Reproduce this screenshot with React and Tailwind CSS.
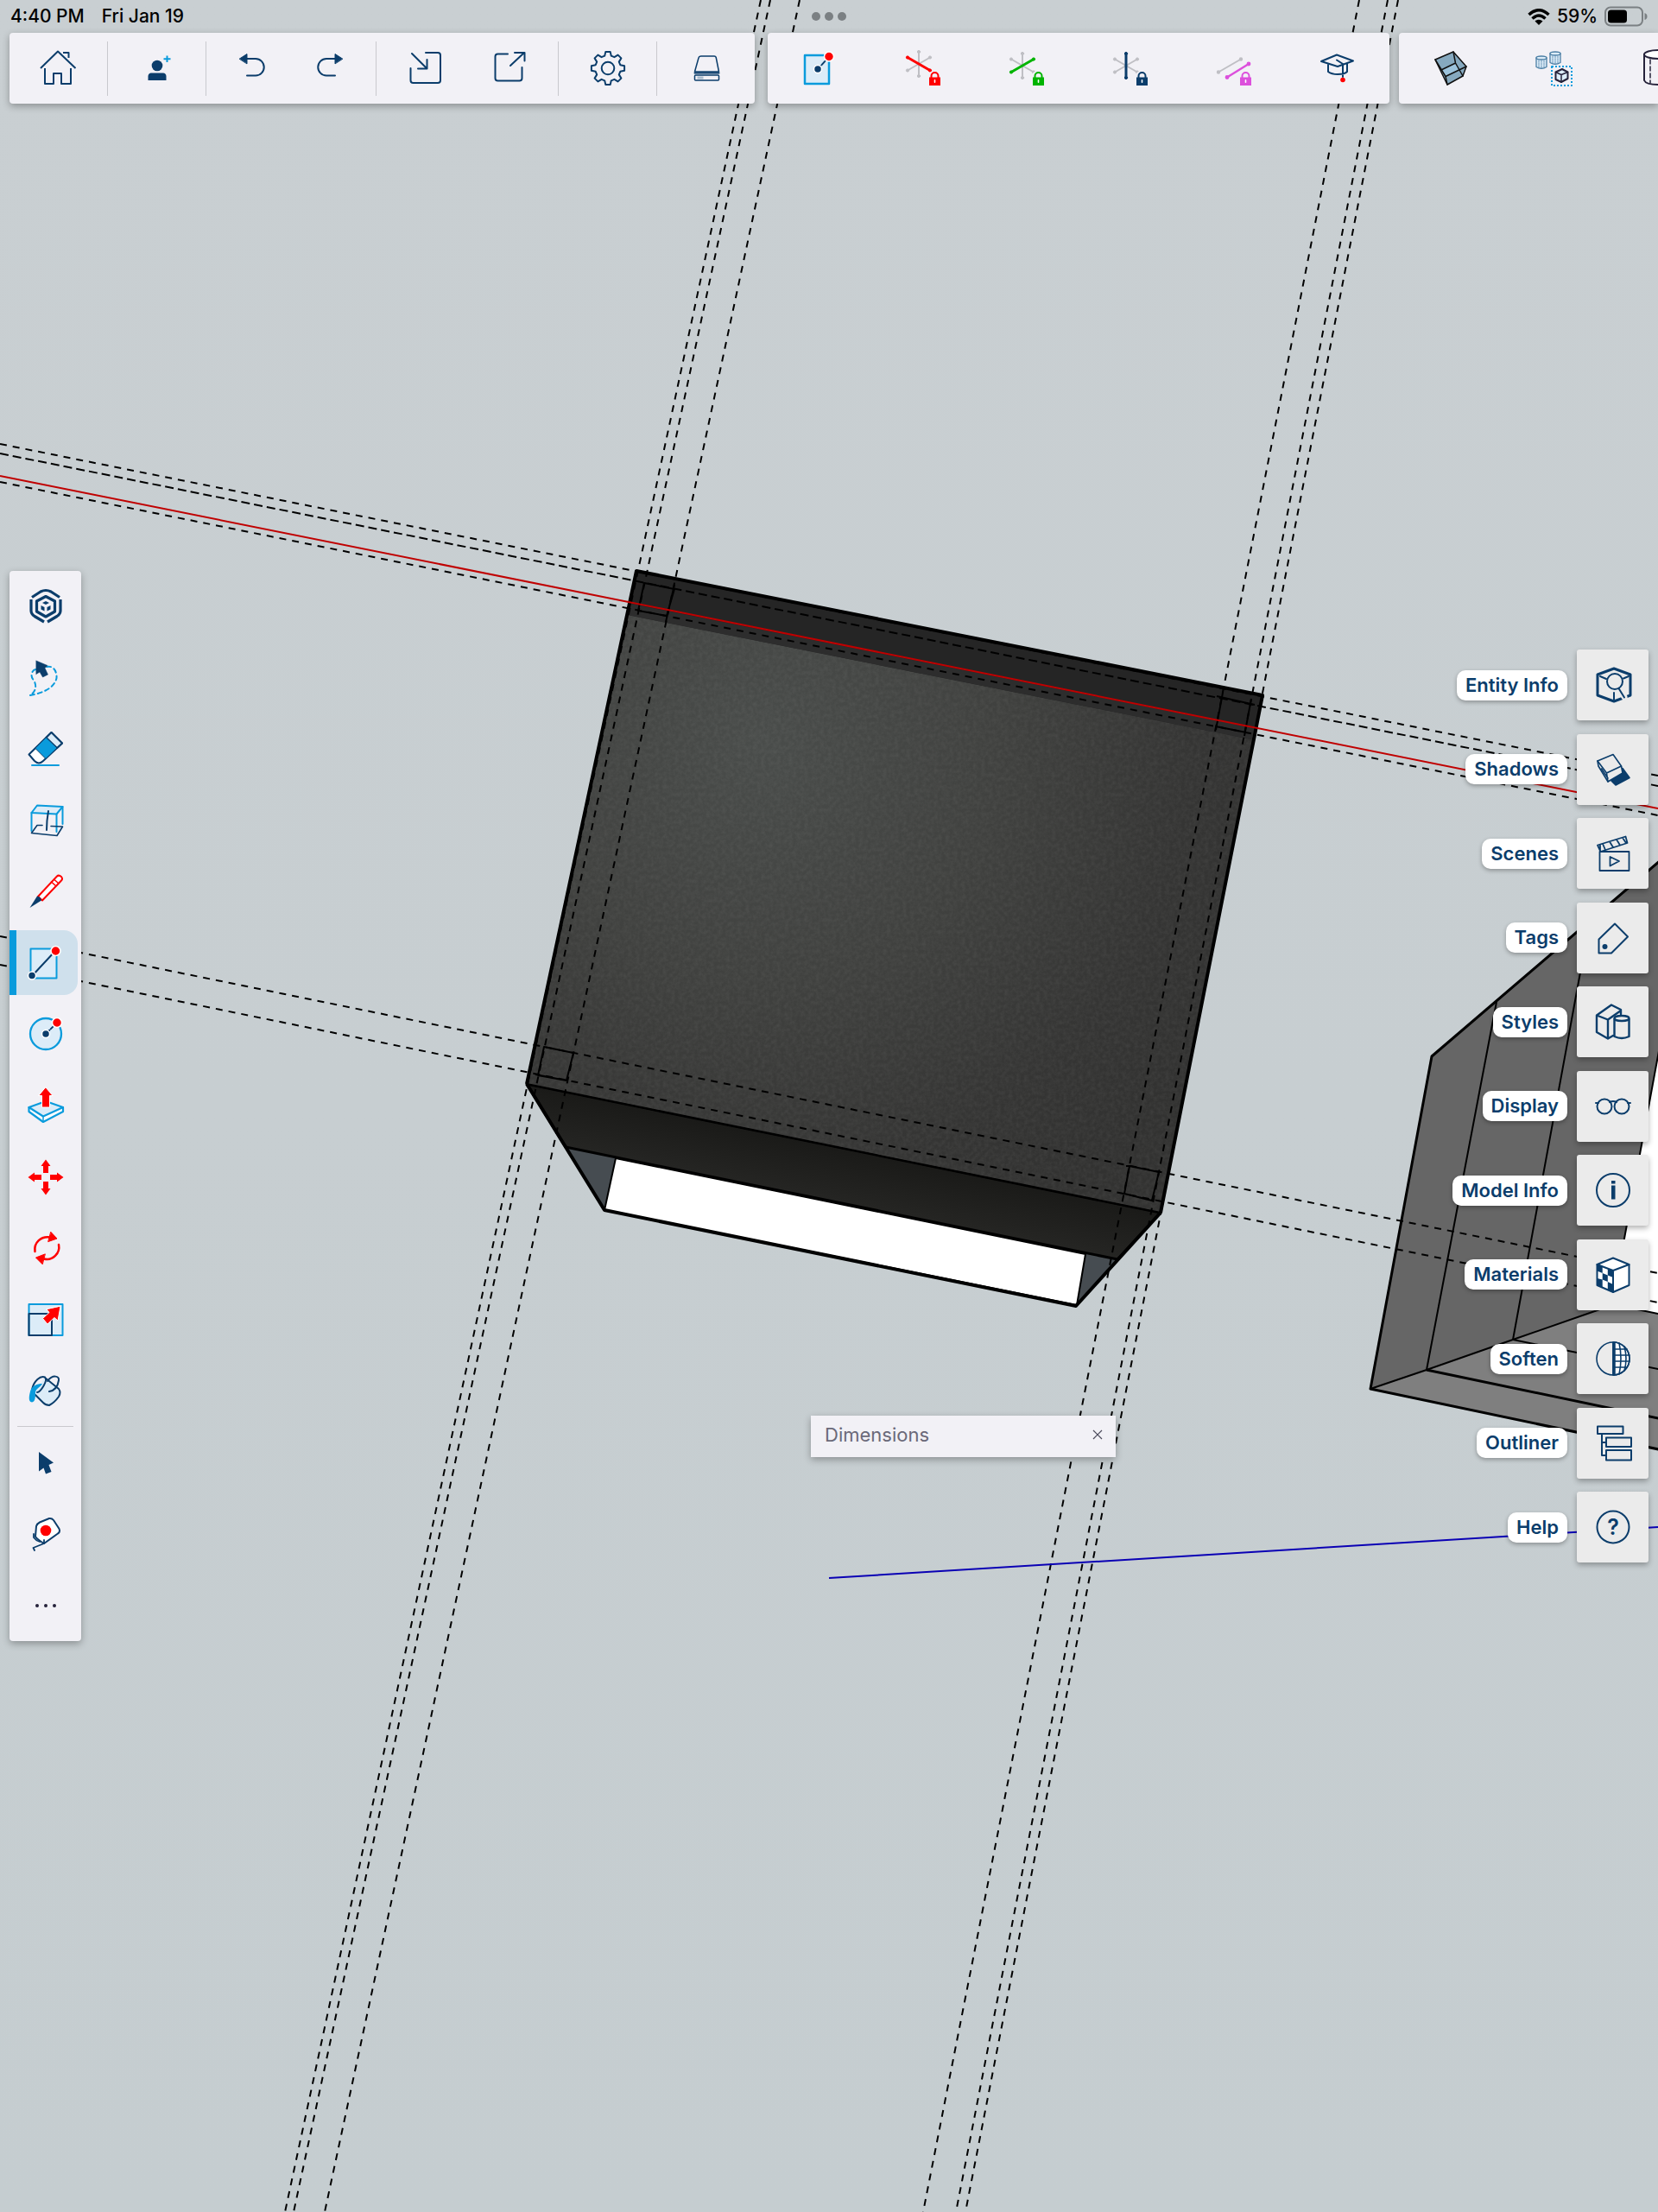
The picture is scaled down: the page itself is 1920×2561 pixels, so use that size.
import { useState } from 'react'

const NAVY = '#0b3d6b'
const BLUE = '#0a9bdc'
const SKY = '#dcecf8'
const RED = '#ff0000'
const GREEN = '#00b400'
const PINK = '#dc50dc'
const GREY = '#bfbfc4'

const panel = 'bg-[#f2f1f6] shadow-[0_3px_8px_rgba(0,0,0,0.3)]'

// every icon is drawn around its own centre
function Icon({ children, stroke = NAVY, width = 2 }) {
  return (
    <svg viewBox="-24 -24 48 48" className="w-12 h-12 shrink-0 overflow-visible" fill="none" stroke={stroke} strokeWidth={width} strokeLinecap="round" strokeLinejoin="round" aria-hidden="true">
      {children}
    </svg>
  )
}

function Dot({ x, y, r = 5.5, color = RED }) {
  return <circle cx={x} cy={y} r={r} fill={color} stroke="#fff" strokeWidth="1.5" />
}

function Lock({ color }) {
  return (
    <g stroke="none">
      <path d="M6 21V10Q6 3 13.5 3Q21 3 21 10V21Z" fill="#f2f1f6" />
      <path d="M9.5 12V9a4 4 0 0 1 8 0V12" fill="none" stroke={color} strokeWidth="2" />
      <rect x="7" y="10.5" width="13" height="9.5" fill={color} />
      <rect x="12.7" y="13" width="1.6" height="4" rx="0.8" fill="#fff" />
    </g>
  )
}

// three crossing axes, the locked one in colour
function AxisIcon({ color, axis, cy = -3 }) {
  const lines = {
    v: [0, -14, 0, 14],
    down: [-13, -7.5, 13, 7.5],
    up: [-13, 7.5, 13, -7.5],
  }
  const order = ['v', 'up', 'down'].filter(k => k !== axis).concat(axis)
  return (
    <Icon>
      <g transform={`translate(-5 ${cy})`}>
        {order.map(k => {
          const [x1, y1, x2, y2] = lines[k]
          const c = k === axis ? color : GREY
          return (
            <g key={k} stroke={c} fill={c} strokeWidth={k === axis ? 3 : 2}>
              <line x1={x1} y1={y1} x2={x2} y2={y2} />
              <circle cx={x1} cy={y1} r="1.6" strokeWidth="1" />
              <circle cx={x2} cy={y2} r="1.6" strokeWidth="1" />
            </g>
          )
        })}
      </g>
      <Lock color={color} />
    </Icon>
  )
}

function gearPath() {
  const pts = []
  const steps = [[-0.26, 14.8], [-0.14, 19.3], [0.14, 19.3], [0.26, 14.8]]
  for (let i = 0; i < 8; i++) {
    const a = (i * Math.PI) / 4
    steps.forEach(([d, r]) => pts.push(`${(Math.sin(a + d) * r).toFixed(1)} ${(-Math.cos(a + d) * r).toFixed(1)}`))
  }
  return 'M' + pts.join('L') + 'Z'
}

const icons = {
  home: (
    <Icon><path strokeLinecap="butt" d="M-21 0L-1-19.5L19.5 0M5-18H11.5V-12M-16 0V18H-6V6H3V18H14V0" /></Icon>
  ),
  person: (
    <Icon>
      <circle cx="0" cy="-3" r="6.3" fill={NAVY} stroke="none" />
      <path d="M-10.5 14V9Q-10 5.500-7 5.500H7Q10 5.500 10.5 9V14Z" fill={NAVY} stroke="none" />
      <path d="M11.5-14.5V-7M7.500-10.700H15.5" stroke={BLUE} strokeLinecap="butt" />
    </Icon>
  ),
  undo: (
    <Icon>
      <path d="M-6-11H4a9.7 9.7 0 0 1 0 19.5H-6" />
      <path d="M-14.5-11L-6-16.5V-5.5Z" fill={NAVY} strokeWidth="1" />
    </Icon>
  ),
  redo: (
    <Icon>
      <path d="M6-11H-4a9.7 9.7 0 0 0 0 19.5H6" />
      <path d="M14.5-11L6-16.5V-5.5Z" fill={NAVY} strokeWidth="1" />
    </Icon>
  ),
  import: (
    <Icon><path d="M0-18H14q3 0 3 3V14q0 3-3 3H-14.5q-3 0-3-3V0M-16-17L1.5 .5M-9 .5H1.5V-10" /></Icon>
  ),
  export: (
    <Icon><path d="M-2-16.5H-13.5q-3 0-3 3V11.5q0 3 3 3H11.5q3 0 3-3V-1M1-3L17-18M6-18H17.5V-8.5" /></Icon>
  ),
  gear: (
    <Icon><path d={gearPath()} /><circle r="7.3" /></Icon>
  ),
  drive: (
    <Icon>
      <path d="M-6-14H9q2 0 2.3 2L14.5 4H-13.5L-9-12q.5-2 3-2Z" strokeWidth="1.5" />
      <path d="M-13.5 5.5H14.5" />
      <rect x="-13.5" y="8" width="28" height="6" rx="1" strokeWidth="1.5" />
      <rect x="-10.5" y="9.5" width="7" height="3" fill="#a9bccd" stroke="none" />
    </Icon>
  ),
  snap: (
    <Icon>
      <rect x="-17" y="-15" width="28" height="33" fill={SKY} stroke={BLUE} strokeWidth="2.5" />
      <path d="M-2 1L10-12" strokeDasharray="5 2" />
      <Dot x={-2} y={1} r={4.5} color={NAVY} />
      <Dot x={11} y={-13.5} />
    </Icon>
  ),
  red: <AxisIcon color={RED} axis="down" cy={-5} />,
  green: <AxisIcon color={GREEN} axis="up" />,
  blue: <AxisIcon color={NAVY} axis="v" />,
  pink: (
    <Icon stroke={GREY}>
      <path d="M-18 4.5L8-10.5" />
      <g fill={GREY}><circle cx="-18" cy="4.5" r="1.2" /><circle cx="8" cy="-10.5" r="1.2" /></g>
      <path d="M-8 10.5L17-5" stroke={PINK} strokeWidth="2.5" />
      <g fill={PINK} stroke={PINK}><circle cx="-8" cy="10.5" r="1.4" /><circle cx="17" cy="-5" r="1.4" /></g>
      <Lock color={PINK} />
    </Icon>
  ),
  cap: (
    <Icon>
      <path d="M-19-8L-1-15.5L18-8.5L0-2Z" />
      <path d="M-11-4V4Q-7 7 0 7Q8 7 11 4V-5M-1-9.5L6-5V10" />
      <circle cx="6" cy="13.5" r="2.8" fill={RED} stroke="none" />
    </Icon>
  ),
  box: (
    <Icon stroke="#111" width={1.5}>
      <path d="M-18-10L3-19L18-2L14 9L-4 19Z" fill="#86a9bf" />
      <path d="M-11 2L5.5-6L11 2L-6 9.5Z" fill="#9cc3dc" stroke="none" />
      <path d="M-18-10L-6 9.5L-4 19M-6 9.5L18-2M3-19L5.5-6L14 9M5.5-6L-11 2" />
    </Icon>
  ),
  solids: (
    <Icon stroke="#4c7fa5" width={1.3}>
      {[[-15, -7], [1, -12]].map(([x, y]) => (
        <g key={x} transform={`translate(${x} ${y})`}>
          <path d="M-6-5V5.500Q0 9 6 5.500V-5" fill={SKY} />
          <ellipse cy="-5" rx="6" ry="2" fill={SKY} />
          <path d="M-3-2V6M0-2V7M3-2V6" strokeWidth="0.8" strokeDasharray="2 1" />
        </g>
      ))}
      <rect x="-3" y="-2" width="23" height="22" stroke={BLUE} strokeWidth="2" strokeDasharray="2 2" strokeLinecap="butt" />
      <path d="M1.5 4.5L9 1L15.5 4.5V12L8 16L1.5 13Z" fill={SKY} stroke="#25223a" strokeWidth="2" />
      <path d="M1.5 4.5L8 7.5V16M8 7.5L15.5 4.5" stroke="#25223a" strokeWidth="1.5" />
    </Icon>
  ),
  cylinder: (
    <Icon stroke="#25223a">
      <ellipse cy="-16" rx="16" ry="5" fill="#fff" />
      <path d="M-16-16V14Q-14 19 0 19Q14 19 16 14V-16" />
      <path d="M-9-10V17" strokeDasharray="5 3" strokeWidth="1.5" />
    </Icon>
  ),
  logo: (
    <Icon width={3.2}>
      <g strokeLinecap="butt">
        <path d="M-16-10.5L-6-17Q0-20 6-17L16-10.5M-17-8V5Q-17 9-13 11.5L-2 18M17-8V5Q17 9 13 11.5L2 18" />
        <path d="M0-11.5L10.5-6V6L0 12L-10.5 6V-6Z" />
      </g>
      <path d="M0-6L4-4L0-2L-4-4ZM-5.5-1L-1.5 1V5.5L-5.5 3.5ZM5.5-1L1.5 1V5.5L5.5 3.5Z" fill={NAVY} stroke="none" />
    </Icon>
  ),
  lasso: (
    <Icon stroke={BLUE}>
      <path d="M1-13C10-15 13-6 12.5 0C10 12-5 18-18.5 20C-11 16-10 8-14.5 2C-19-4-15-10-11-10" strokeDasharray="5 4" />
      <path d="M-11-20L2-14.5L-1-11.5L2.5-4L-3.5-1L-7-7L-11-4.5Z" fill={NAVY} stroke={NAVY} strokeWidth="0.5" />
    </Icon>
  ),
  eraser: (
    <Icon>
      <path d="M6.5-19L19-6.5L-3 14Q-8 19-13 14L-19.5 6.5Z" fill="#fff" />
      <path d="M6.5-19L19-6.5L13-1L.5-13Z" fill={SKY} />
      <path d="M.5-13L13-1L0 11.5L-12-.5Z" fill={BLUE} strokeWidth="1" />
      <path d="M-16 19H15" stroke={BLUE} />
    </Icon>
  ),
  section: (
    <Icon stroke={BLUE}>
      <path d="M-10-17.5L19.5-16L12.5-7.5L-16.5-9Z" fill={SKY} />
      <path d="M-16.5-9V12M12.5-7.5V13M19.5-16V4" />
      <path d="M-16.5 14.5L-10 5.5H-4M6 6.5L19.5 7L13 17.5L-16.5 14.5" stroke={NAVY} strokeWidth="1.6" />
      <path d="M3-11Q1 0 1 11" stroke={NAVY} />
    </Icon>
  ),
  pencil: (
    <Icon stroke={RED}>
      <path d="M-9 6L13-17.5Q15-19.5 18-17Q20-14.5 18-12.5L-4 10.5Z" fill="#fff" />
      <path d="M6.5-11L11.5-6.5M9.5-14L14.5-9.5" strokeWidth="1.5" />
      <path d="M-18.5 19L-10 5.5Q-6 6-5 10.5Z" fill={NAVY} stroke="none" />
    </Icon>
  ),
  rect: (
    <Icon>
      <rect x="-16.5" y="-16.5" width="30" height="34" fill={SKY} stroke={BLUE} />
      <path d="M-15 15L12-14" />
      <Dot x={-15} y={14.5} r={4.5} color={NAVY} />
      <Dot x={12.5} y={-14} />
    </Icon>
  ),
  circle: (
    <Icon>
      <circle r="18" fill={SKY} stroke={BLUE} strokeWidth="2.3" />
      <path d="M0 0L12-12" strokeDasharray="6 2" />
      <Dot x={0} y={0} r={4.5} color={NAVY} />
      <Dot x={13} y={-13} />
    </Icon>
  ),
  push: (
    <Icon stroke={BLUE} width={2.2}>
      <path d="M-19.5 2V7L-3 19L20 7V2" fill="#fff" />
      <path d="M-19.5 2L0-5L20 2L-3 12.5Z" fill={SKY} />
      <path d="M-3 12.5V18" strokeWidth="1.5" />
      <path d="M0-21L8-11.5H4.5V2H-4.5V-11.5H-8Z" fill={RED} stroke="#fff" strokeWidth="1" />
    </Icon>
  ),
  move: (
    <Icon>
      {[0, 90, 180, 270].map(a => (
        <path key={a} transform={`rotate(${a})`} d="M0-20.5L5.5-13H3V-5H-3V-13H-5.5Z" fill={RED} stroke="none" />
      ))}
    </Icon>
  ),
  rotate: (
    <Icon stroke={RED} width={2.5}>
      <path d="M-12.5 4C-14-6-6-14 5-12.5M15-4C17 6 8 15-2 12.5" />
      <path d="M6-18.5L13-11L3-7.5ZM-4 18.5L-11.5 11L-1 7Z" fill={RED} strokeWidth="1" />
    </Icon>
  ),
  scale: (
    <Icon>
      <rect x="-19.5" y="-18" width="39" height="36" fill={SKY} stroke={BLUE} />
      <path d="M-19.5-7H7V18H-19.5Z" />
      <path d="M17-15.5L14 1L10-2.5L2 5L-3.5-1.5L4-8.5L1-12Z" fill={RED} stroke="#fff" strokeWidth="1" />
    </Icon>
  ),
  bucket: (
    <Icon>
      <path d="M-1-15.5L15-2Q18 2 15 7Q10 14 4 17Q0 17-3 14L-15 5Z" fill={SKY} stroke="none" />
      <path d="M-16-1C-14-11-6-18-1-15.5C3-12-6 2-10 2M-1-15L15-2Q18 2 15 7Q10 14 4 17Q0 17-3 14L-12 5" />
      <path d="M2-11C8-19 16-17 15-12C14-5 10 0 4 1" />
      <path d="M-4-8C-7-3-11-3-12 2C-12 7-12 13-16 13.5C-21 13-19 5-18 1C-16-6-10-8-4-8Z" fill={BLUE} stroke="none" />
    </Icon>
  ),
  cursor: (
    <Icon><path d="M-8-13L9-.5L3.5 2L6.5 10L0 12.5L-2.5 5.5L-8 9.5Z" fill={NAVY} stroke="none" /></Icon>
  ),
  tape: (
    <Icon>
      <path d="M-11-9Q-10-12-7-13.5L4-18Q7-18.5 9-16L15.5-6Q17-2 14-.5L-2 11Q-9 7-12 3Z" fill="#fff" />
      <path d="M-2 7V11L-14.5 16L-13 19M-14 0V4Q-11 8-7 9" strokeWidth="1.8" />
      <circle cy="-4" r="6.3" fill={RED} stroke="none" />
    </Icon>
  ),
  more: (
    <Icon stroke="none">
      <g fill="#25223a"><circle cx="-10" r="2" /><circle r="2" /><circle cx="10" r="2" /></g>
    </Icon>
  ),
  entity: (
    <Icon width={3}>
      <path d="M-18-12L1-19L20-12V12L1 19L-18 12Z" />
      <path d="M-15-10L-8-7M18-10L12-7.5M1 9V17" strokeWidth="2" />
      <path d="M7 4L13 14" stroke="#ebebeb" strokeWidth="7" />
      <circle cx="2" cy="-4" r="9" strokeWidth="2" fill="#ebebeb" />
      <path d="M6.5 4L13 14.5" strokeWidth="2" />
    </Icon>
  ),
  shadows: (
    <Icon width={1.6}>
      <path d="M11-1.5L19 9.5L3 18L-2 13Z" fill={NAVY} />
      <path d="M0-17.5L-18-10L-17-4L-6 14L11 4L9.5-4Z" fill="#ebebeb" />
      <path d="M-18-10L-7.5 4L9.5-4M-7.5 4L-6 14M-13.5-1L-6 10" />
    </Icon>
  ),
  scenes: (
    <Icon width={1.8}>
      <path d="M-15.5-2H18.5V20H-15.5ZM-3.5 4L7 9L-3.5 14.5ZM-18-9.5L14.5-19.5L16.5-12L-14.5-2ZM-12-11L-9-4M-4-13.5L0-7M4-16L8-9.5M11-18L15-12M-15-9L-15-3" />
    </Icon>
  ),
  tags: (
    <Icon>
      <path d="M2-16.5L17-1.5L-2 17.5H-16.5V1.5Z" />
      <circle cx="-9.5" cy="10" r="3" fill={NAVY} stroke="none" />
    </Icon>
  ),
  styles: (
    <Icon width={2.4}>
      <path d="M0 16L-6 19.5L-19 12V-7.5L-2-19.5L9-14V-9M-6 19.5V-2.5M-19-7.5L-6-2.5L9-13" />
      <path d="M1.5-3V17Q10 21 18.5 17V-3" fill="#ebebeb" />
      <ellipse cx="10" cy="-4" rx="8.5" ry="3" fill="#ebebeb" />
    </Icon>
  ),
  display: (
    <Icon><circle cx="-10" r="8.5" /><circle cx="10" r="8.5" /><path d="M-20-4H-17M20-4H17M-4-5Q0-7 4-5" /></Icon>
  ),
  info: (
    <Icon>
      <circle r="19" />
      <rect x="-2" y="-5.5" width="4.5" height="16" fill={NAVY} stroke="none" />
      <rect x="-2" y="-11" width="4.5" height="3.5" fill={NAVY} stroke="none" />
    </Icon>
  ),
  materials: (
    <Icon>
      <path d="M0-19.5L18.5-12V12L0 20L-18.5 12V-12Z" fill="#fff" />
      <path d="M-18.5-12L-12.3-9.5V-2L-18.5-4.5ZM-6.2-7.3L0-5V3L-6.2 .5ZM-12.3-2L-6.2 .5V8L-12.3 5.5ZM-18.5 4L-12.3 5.5V14.5L-18.5 12ZM-6.2 8L0 11V20L-6.2 17.3Z" fill={NAVY} stroke="none" />
      <path d="M-18.5-12L0-5L18.5-12M0-5V20" />
    </Icon>
  ),
  soften: (
    <Icon width={1.6}>
      <path d="M0-19A19 19 0 0 1 0 19Z" fill="#fff" />
      <circle r="19" />
      <path d="M1-18V18" strokeWidth="3.5" />
      <path d="M7-18Q11 0 7 18M13-14Q17 0 13 14M1-11H16M1-4H19M1 3H19M1 10H16" />
    </Icon>
  ),
  outliner: (
    <Icon><path d="M-18-19.5H11.5V-11H-18ZM-8-6.5H21V4H-8ZM-8 8H21V19.5H-8ZM-13-11V14H-8M-13-1H-8" /></Icon>
  ),
  help: (
    <Icon>
      <circle r="18.5" />
      <text y="9" textAnchor="middle" fontSize="25" fontWeight="600" fill={NAVY} stroke="none">?</text>
    </Icon>
  ),
}

const fileGroups = [
  { cell: 'w-[113px]', items: [['home', 'Home']] },
  { cell: 'w-[113px]', items: [['person', 'Add collaborator']] },
  { cell: 'w-[98px]', items: [['undo', 'Undo'], ['redo', 'Redo']] },
  { cell: 'w-[105px]', items: [['import', 'Import'], ['export', 'Export']] },
  { cell: 'w-[113px]', items: [['gear', 'Settings']] },
  { cell: 'w-[113px]', items: [['drive', 'Storage']] },
]

const inferenceTools = [
  ['snap', 'Draw from centre'],
  ['red', 'Lock red axis'],
  ['green', 'Lock green axis'],
  ['blue', 'Lock blue axis'],
  ['pink', 'Lock parallel'],
  ['cap', 'Instructor'],
]

const viewTools = [['box', 'X-ray'], ['solids', 'Hide rest of model'], ['cylinder', 'Hidden geometry']]

const drawTools = [
  ['logo', 'Search'], ['lasso', 'Lasso'], ['eraser', 'Eraser'], ['section', 'Section plane'],
  ['pencil', 'Line'], ['rect', 'Rectangle'], ['circle', 'Circle'], ['push', 'Push/Pull'],
  ['move', 'Move'], ['rotate', 'Rotate'], ['scale', 'Scale'], ['bucket', 'Paint'],
]

const recentTools = [['cursor', 'Select'], ['tape', 'Tape measure'], ['more', 'More tools']]

const sidePanels = [
  ['entity', 'Entity Info'], ['shadows', 'Shadows'], ['scenes', 'Scenes'], ['tags', 'Tags'],
  ['styles', 'Styles'], ['display', 'Display'], ['info', 'Model Info'], ['materials', 'Materials'],
  ['soften', 'Soften'], ['outliner', 'Outliner'], ['help', 'Help'],
]

// dashed guides: x1 y1 x2 y2
const steepGuides = [
  [881, 0, 330, 2561], [892, 0, 340, 2561], [926, 0, 376, 2561],
  [1574, 0, 1069, 2561], [1607, 0, 1107, 2561], [1619, 0, 1118, 2561],
]
const shallowGuides = [[0, 514, 1920, 898], [0, 558, 1920, 944], [0, 1084, 1920, 1474], [0, 1117, 1920, 1508]]

function Model() {
  return (
    <svg viewBox="0 0 1920 2561" preserveAspectRatio="xMidYMid slice" className="absolute inset-0 w-full h-full" fill="none" stroke="#000" strokeLinejoin="round" aria-hidden="true">
      <defs>
        <radialGradient id="face" gradientUnits="userSpaceOnUse" cx="880" cy="860" r="620">
          <stop offset="0" stopColor="#4a4d4b" />
          <stop offset="0.45" stopColor="#40413f" />
          <stop offset="0.8" stopColor="#353534" />
          <stop offset="1" stopColor="#323231" />
        </radialGradient>
        <linearGradient id="front" gradientUnits="userSpaceOnUse" x1="980" y1="1325" x2="966" y2="1395">
          <stop offset="0" stopColor="#191917" />
          <stop offset="1" stopColor="#262624" />
        </linearGradient>
        <filter id="grain" x="0" y="0" width="100%" height="100%">
          <feTurbulence type="fractalNoise" baseFrequency="0.22" numOctaves="3" seed="4" />
          <feColorMatrix values="0 0 0 0 0.6  0 0 0 0 0.6  0 0 0 0 0.58  0.5 0 0 0 -0.15" />
          <feComposite in2="SourceGraphic" operator="in" />
        </filter>
      </defs>

      {/* cabinet at the right edge */}
      <path d="M1930 990L1658 1223L1587 1608L1930 1680Z" fill="#666" stroke="none" />
      <path d="M1587 1608L1652 1586L1752 1551L1850 1517L1880 1506L1930 1520V1680Z" fill="#7f7f7f" stroke="none" />
      <path d="M1925 1195L1867 1510L1930 1523Z" fill="#fff" strokeWidth="2" />
      <path d="M1930 990L1658 1223L1587 1608L1930 1680" strokeWidth="3" />
      <path d="M1587 1608L1652 1586L1752 1551L1867 1511" strokeWidth="2" />
      <path d="M1652 1586L1733 1160M1752 1551L1841 1066M1752 1551L1930 1587" strokeWidth="2" />
      <path d="M1652 1586L1930 1644" strokeWidth="3" />

      {/* box */}
      <path d="M610 1255L699 1401L1247 1511L1344 1404Z" fill="#464c51" stroke="none" />
      <path d="M713 1341L1257 1452L1247 1511L700 1401Z" fill="#fff" strokeWidth="2" />
      <path d="M610 1255L655 1328L1294 1458L1344 1404Z" fill="url(#front)" strokeWidth="3" />
      <path d="M737 661L1462 805L1344 1404L610 1255Z" fill="url(#face)" />
      <path d="M737 661L1462 805L1344 1404L610 1255Z" fill="#fff" stroke="none" filter="url(#grain)" opacity="0.25" />
      <path d="M737 661L1462 805L1449 856L727 712Z" fill="#252525" stroke="none" />
      <path d="M730 699L1453 843L1449 856L727 712Z" fill="#2d2d2d" stroke="none" />
      <path d="M610 1255L737 661L1462 805L1344 1404" strokeWidth="4" />
      <path d="M610 1255L1344 1404" strokeWidth="2" />
      <path d="M610 1255L700 1401L1246 1512L1344 1404" strokeWidth="4" />
      <path d="M746 675L781 682L772 713L739 707ZM781 677L771 720M1416 802L1408 845M1409 806L1453 816M1449 809L1441 852M1408 841L1443 848M630 1212L664 1219L656 1251L623 1245ZM620 1244L656 1251M1308 1350L1342 1357L1334 1390L1302 1382ZM1304 1350H1308" strokeWidth="2" />

      <g strokeWidth="2">
        {shallowGuides.map(([a, b, c, d]) => (
          <line key={b} x1={a} y1={b} x2={c} y2={d} strokeDasharray="8 7" />
        ))}
        <line x1="0" y1="525" x2="1920" y2="910" strokeDasharray="10 5" />
        {steepGuides.map(([a, b, c, d]) => (
          <line key={a} x1={a} y1={b} x2={c} y2={d} strokeDasharray="8 7" />
        ))}
      </g>
      <line x1="0" y1="551" x2="1920" y2="936" stroke="#c00000" strokeWidth="2" />
      <line x1="960" y1="1827" x2="1920" y2="1768" stroke="#0a00b4" strokeWidth="2" />
    </svg>
  )
}

function StatusBar() {
  return (
    <div className="grid grid-cols-3 items-center h-[38px] px-3 text-[21px] leading-6 font-medium text-black">
      <div className="flex gap-5">
        <span>4:40 PM</span>
        <span>Fri Jan 19</span>
      </div>
      <div className="flex justify-center gap-[5px]">
        <span className="w-[10px] h-[10px] rounded-full bg-[#7b8083]" />
        <span className="w-[10px] h-[10px] rounded-full bg-[#7b8083]" />
        <span className="w-[10px] h-[10px] rounded-full bg-[#7b8083]" />
      </div>
      <div className="flex justify-end items-center gap-2">
        <svg viewBox="0 0 26 19" className="w-[26px] h-[19px]" fill="none" stroke="#000" strokeWidth="3.5" aria-hidden="true">
          <path d="M1.5 7Q13-3.5 24.5 7M5.5 11.5Q13 4.5 20.5 11.5" />
          <path d="M13 19L8.5 14.5Q13 11 17.5 14.5Z" fill="#000" stroke="none" />
        </svg>
        <span>59%</span>
        <svg viewBox="0 0 50 24" className="w-[50px] h-6" aria-hidden="true">
          <rect x="1" y="1.5" width="43" height="21" rx="6" fill="none" stroke="#7b8083" strokeWidth="2" />
          <rect x="4" y="4.5" width="22" height="15" rx="3.5" fill="#000" />
          <path d="M46.5 8Q49.5 9 49.5 12Q49.5 15 46.5 16Z" fill="#7b8083" />
        </svg>
      </div>
    </div>
  )
}

function ToolButton({ icon, label, className, ...rest }) {
  return (
    <button aria-label={label} className={`flex items-center justify-center ${className}`} {...rest}>
      {icons[icon]}
    </button>
  )
}

export default function App() {
  const [tool, setTool] = useState('rect')
  const [open, setOpen] = useState(true)

  return (
    <div className="relative grid min-h-screen overflow-hidden bg-linear-to-b from-[#c9cfd2] to-[#c5cdd0] font-[Inter,sans-serif]">
      <Model />

      <header className="relative z-10 col-start-1 row-start-1 self-start min-w-0">
        <StatusBar />
        <div className="flex pl-[11px] h-[82px]">
          <div className={`flex items-center shrink-0 mr-[15px] rounded ${panel}`}>
            {fileGroups.map((g, i) => (
              <div key={i} className={`flex h-[63px] ${i > 0 ? 'border-l border-[#c9c9ce]' : ''}`}>
                {g.items.map(([icon, label], j) => (
                  <ToolButton
                    key={icon}
                    icon={icon}
                    label={label}
                    className={`${g.cell} ${g.items.length > 1 ? (j === 0 ? 'pl-2' : 'pr-2') : ''}`}
                  />
                ))}
              </div>
            ))}
          </div>
          <div className={`flex shrink-0 mr-[11px] rounded ${panel}`}>
            {inferenceTools.map(([icon, label]) => <ToolButton key={icon} icon={icon} label={label} className="w-[120px]" />)}
          </div>
          <div className={`flex flex-1 min-w-0 overflow-hidden rounded-l ${panel}`}>
            {viewTools.map(([icon, label]) => <ToolButton key={icon} icon={icon} label={label} className="w-[120px] shrink-0" />)}
          </div>
        </div>
      </header>

      <main className="relative col-start-1 row-start-1 self-center flex items-center justify-between px-[11px]">
        <div className={`flex flex-col w-[83px] h-[1239px] rounded ${panel}`}>
          {drawTools.map(([icon, label]) => (
            <div key={icon} className="flex-1 flex items-center">
              <ToolButton
                icon={icon}
                label={label}
                onClick={() => setTool(icon)}
                className={tool === icon ? 'w-[79px] h-[75px] rounded-r-2xl bg-[#cfe0ec] shadow-[inset_8px_0_0_#0a9bdc] pl-[3px]' : 'w-full h-[75px]'}
              />
            </div>
          ))}
          <hr className="mx-[9px] border-[#c9c9ce]" />
          {recentTools.map(([icon, label]) => (
            <ToolButton key={icon} icon={icon} label={label} className="flex-1" />
          ))}
        </div>

        <div className="flex flex-col justify-between h-[1057px]">
          {sidePanels.map(([icon, label]) => (
            <div key={icon} className="flex items-center justify-end gap-[11px]">
              <label htmlFor={icon} className="h-[35px] px-[10px] rounded-[10px] bg-white text-[22px] leading-[35px] font-semibold text-[#0b3d6b] shadow-[0_2px_5px_rgba(0,0,0,0.3)]">
                {label}
              </label>
              <button id={icon} className="flex items-center justify-center w-[83px] h-[82px] rounded-[3px] bg-[#ebebeb] shadow-[0_3px_6px_rgba(0,0,0,0.3)]">
                {icons[icon]}
              </button>
            </div>
          ))}
        </div>
      </main>

      {open && (
        <div className={`absolute left-[939px] top-[1639px] flex items-center justify-between w-[353px] h-12 px-4 pb-1 ${panel}`}>
          <span className="text-[22px] leading-6 text-[#6a6979]">Dimensions</span>
          <button aria-label="Close" onClick={() => setOpen(false)}>
            <svg viewBox="0 0 10 10" className="w-[10px] h-[10px] overflow-visible" stroke="#4a495a" strokeWidth="1.2" aria-hidden="true">
              <path d="M0 0L10 10M10 0L0 10" />
            </svg>
          </button>
        </div>
      )}
    </div>
  )
}
